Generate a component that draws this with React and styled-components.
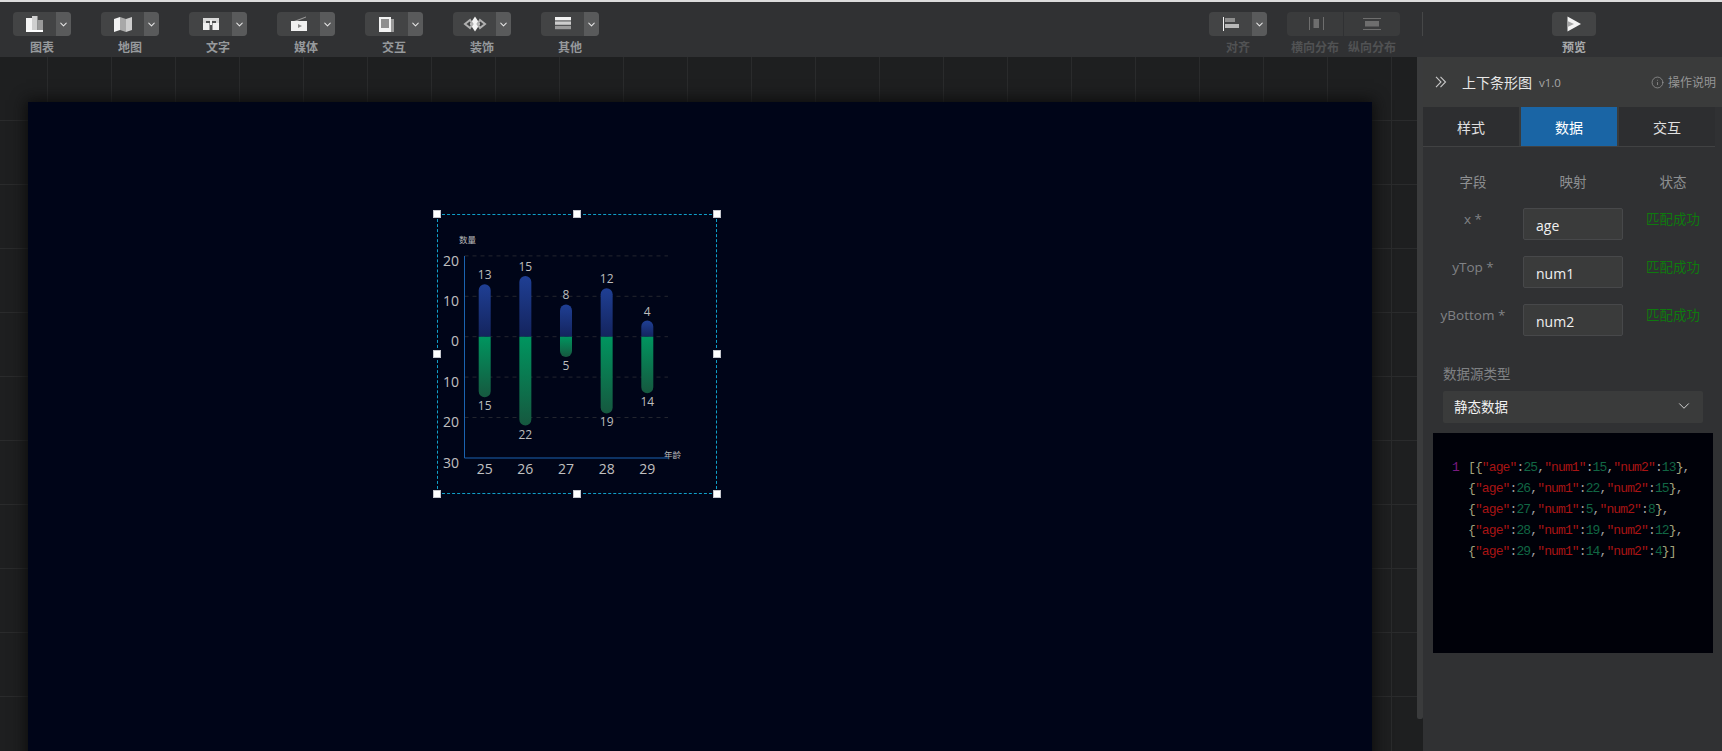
import React from 'react'
import styled, {createGlobalStyle} from 'styled-components'
import {ChevronDown, Info} from 'lucide-react'

const GlobalStyle = createGlobalStyle`
  html, body {
    margin: 0;
    height: 100%;
    background: #1e1f20;
  }
  body {
    font-family: "Open Sans", "Noto Sans CJK SC", sans-serif;
    overflow: hidden;
  }
`

const Page = styled.div`
  display: flex;
  flex-direction: column;
  height: 100vh;
  overflow: hidden;
  border-top: 2px solid #dcdcdc;
  box-sizing: border-box;
`

const Toolbar = styled.header`
  display: flex;
  flex: none;
  height: 55px;
  padding: 10px 126px 0 13px;
  box-sizing: border-box;
  background: #303133;
`

const ToolGroup = styled.div`
  display: flex;
  gap: ${props => props.$gap || 0}px;
`

const RightTools = styled(ToolGroup)`
  margin-left: auto;
`

const Tool = styled.div`
  display: flex;
  flex-direction: column;
  align-items: center;
  width: ${props => props.$width || 58}px;
  margin-right: ${props => props.$after || 0}px;
`

const ToolButton = styled.div`
  display: flex;
  width: 100%;
  height: 24px;
  overflow: hidden;
  background: ${props => (props.$dim ? '#3a3b3c' : '#434445')};
  border-radius: ${props => props.$radius || '4px'};
`

const ToolFace = styled.div`
  flex: 1;
  display: flex;
  align-items: center;
  justify-content: center;
`

const ToolCaret = styled.div`
  flex: none;
  width: 15px;
  display: flex;
  align-items: center;
  justify-content: center;
  background: #595a5b;
  color: #e6e6e6;
`

const ToolLabel = styled.span`
  margin-top: 3px;
  font-size: 12px;
  line-height: 17px;
  font-weight: 700;
  white-space: nowrap;
  color: ${props => (props.$dim ? '#515253' : props.$bright ? '#a8aaac' : '#96999c')};
`

const ToolDivider = styled.div`
  width: 1px;
  height: 24px;
  margin-right: 129px;
  background: #464748;
`

const Main = styled.main`
  flex: 1;
  min-height: 0;
  display: flex;
  background: #1e1f20;
`

const Workspace = styled.section`
  flex: 1;
  min-width: 0;
  overflow: hidden;
  padding: 45px 0 0 28px;
  box-sizing: border-box;
  background-color: #1e1f20;
  background-image:
    linear-gradient(to right, #2a2b2c 1px, transparent 1px),
    linear-gradient(to bottom, #2a2b2c 1px, transparent 1px);
  background-size: 64px 64px;
  background-position: 47px 63px;
`

const Stage = styled.div`
  position: relative;
  width: 1344px;
  height: 900px;
  background: #000518;
  box-shadow: 0 0 14px 2px #0c0c0c;
`

const Widget = styled.div`
  position: absolute;
  left: 409px;
  top: 112px;
  width: 280px;
  height: 280px;
  box-sizing: border-box;
  border: 1px dashed #0f9fc8;
`

const ChartSvg = styled.svg`
  position: absolute;
  left: -1px;
  top: -1px;
  display: block;
`

const HandleLayer = styled.div`
  position: absolute;
  left: -1px;
  top: -1px;
  width: 280px;
  height: 280px;
`

const Handle = styled.span`
  position: absolute;
  left: ${props => props.$x}%;
  top: ${props => props.$y}%;
  width: 8px;
  height: 8px;
  margin: -4px 0 0 -4px;
  box-sizing: border-box;
  background: #fff;
  border: 1px solid #c4c6cc;
`

const ScrollThumb = styled.div`
  flex: none;
  width: 6px;
  height: 662px;
  background: #3a3b3c;
  border-radius: 0 0 2px 2px;
`

const Panel = styled.aside`
  flex: none;
  width: 299px;
  background: #303133;
`

const PanelHead = styled.div`
  display: flex;
  align-items: center;
  height: 50px;
  padding: 0 6px 0 12px;
  box-sizing: border-box;
  background: #3a3b3b;
  color: #c8c8c8;
`

const PanelTitle = styled.span`
  margin-left: 15px;
  font-size: 14px;
  color: #e8e8e8;
`

const PanelVersion = styled.span`
  margin-left: 7px;
  font-size: 11.5px;
  color: #a8a8a8;
`

const HelpLink = styled.span`
  display: flex;
  align-items: center;
  gap: 4px;
  margin-left: auto;
  font-size: 12px;
  color: #969696;
`

const TabRow = styled.nav`
  display: flex;
  gap: 2px;
  width: 292px;
  height: 40px;
  box-sizing: border-box;
  border-bottom: 1px solid #414243;
  background: #3a3b3b;
`

const Tab = styled.div`
  flex: 1;
  display: flex;
  align-items: center;
  justify-content: center;
  font-size: 14px;
  background: ${props => (props.$active ? '#1a65a5' : '#2d2e30')};
  color: ${props => (props.$active ? '#fff' : '#e0e0e0')};
`

const FieldGrid = styled.div`
  display: grid;
  grid-template-columns: repeat(3, 100px);
  grid-template-rows: 24px repeat(3, 32px);
  row-gap: 16px;
  padding-top: 21px;
  align-items: start;
  justify-items: center;
`

const FieldHeading = styled.span`
  font-size: 13.5px;
  line-height: 28px;
  color: #8d8f91;
`

const FieldName = styled.span`
  font-size: 13.5px;
  line-height: 22px;
  color: #808285;
`

const FieldInput = styled.input`
  width: 100%;
  height: 32px;
  padding: 2px 0 0 12px;
  box-sizing: border-box;
  font: 14px "Open Sans", "Noto Sans CJK SC", sans-serif;
  color: #f0f0f0;
  background: #3a3b3b;
  border: 1px solid #47484a;
  border-radius: 2px;
  outline: none;
`

const FieldStatus = styled.span`
  font-size: 13.5px;
  line-height: 22px;
  color: #0e7a0e;
`

const SourceBlock = styled.div`
  padding: 28px 19px 0 20px;
`

const SourceLabel = styled.div`
  font-size: 13.5px;
  line-height: 20px;
  color: #808285;
`

const SourceSelect = styled.div`
  display: flex;
  align-items: center;
  justify-content: space-between;
  height: 32px;
  margin-top: 7px;
  padding: 0 10px 2px 11px;
  box-sizing: border-box;
  font-size: 13.5px;
  color: #f2f2f2;
  background: #3a3b3b;
  border-radius: 2px;
`

const CodeBox = styled.pre`
  display: flex;
  width: 280px;
  height: 220px;
  margin: 10px 0 0 10px;
  padding: 24px 0 0 19px;
  box-sizing: border-box;
  overflow: hidden;
  background: #000109;
  font-family: "Liberation Mono", monospace;
  font-size: 13px;
  letter-spacing: -0.88px;
  line-height: 21px;
  color: #a0a0a0;
`

const LineNumber = styled.span`
  width: 16px;
  flex: none;
  color: #7a1a80;
`

const CodeLines = styled.code`
  font: inherit;
  letter-spacing: inherit;
  white-space: pre;
`

const CodeRow = styled.div`
  height: 21px;
`

const TOKEN_COLORS = {
  bracket: '#a3a37c',
  key: '#a81414',
  number: '#116644',
  punct: '#a0a0a0'
}

const Token = styled.span`
  color: ${props => TOKEN_COLORS[props.$kind]};
`

const TOP_TOOLS = [
  {label: '图表', icon: 'chart'},
  {label: '地图', icon: 'map'},
  {label: '文字', icon: 'text'},
  {label: '媒体', icon: 'media'},
  {label: '交互', icon: 'interact'},
  {label: '装饰', icon: 'decor'},
  {label: '其他', icon: 'other'}
]

const ICONS = {
  chart: (
    <>
      <rect x="0" y="3" width="6" height="12" fill="#f4f4f4" />
      <rect x="6" y="1" width="5.5" height="14" fill="#cfcfcf" />
      <rect x="11.5" y="5" width="5.5" height="10" fill="#9a9a9a" />
      <rect x="0" y="15" width="17" height="2" fill="#fff" />
    </>
  ),
  map: (
    <>
      <path d="M0 4 L6 2 V15 L0 17 Z" fill="#f2f2f2" />
      <path d="M6 2 L12 4 V17 L6 15 Z" fill="#a8a8a8" />
      <path d="M12 4 L18 2 V15 L12 17 Z" fill="#cdcdcd" />
    </>
  ),
  text: (
    <>
      <rect x="1" y="3" width="16" height="12" fill="#f0f0f0" />
      <path d="M1 3 H17 V8 H1 Z" fill="#d8d8d8" />
      <path d="M4 6 H14 V8 H10.5 V15 H7.5 V8 H4 Z" fill="#505152" />
      <rect x="8" y="5" width="2" height="5" fill="#f0f0f0" />
    </>
  ),
  media: (
    <>
      <path d="M4 6 L16 1.5 V2.6 L6 6.5 Z" fill="#9a9a9a" />
      <rect x="1" y="6" width="16" height="10" fill="#f0f0f0" />
      <path d="M8 9 L12 11 L8 13 Z" fill="#8a8a8a" />
    </>
  ),
  interact: (
    <>
      <rect x="11" y="4" width="5" height="13" fill="#999" />
      <rect x="1" y="2" width="12" height="15" fill="#f2f2f2" />
      <rect x="3" y="4" width="8" height="9" fill="#8e8e8e" />
    </>
  ),
  decor: (
    <>
      <path d="M9 1.5 L14 9 L9 16.5 L4 9 Z" fill="#f4f4f4" />
      <path d="M4 5 L-1 9 L4 13 L6.5 9 Z" fill="none" stroke="#b0b0b0" strokeWidth="2" />
      <path d="M14 5 L19 9 L14 13 L11.5 9 Z" fill="none" stroke="#b0b0b0" strokeWidth="2" />
    </>
  ),
  other: (
    <>
      <rect x="1" y="2" width="16" height="3.4" fill="#f2f2f2" />
      <rect x="1" y="6.4" width="16" height="3.4" fill="#cdcdcd" />
      <rect x="1" y="10.8" width="16" height="3.4" fill="#9a9a9a" />
    </>
  ),
  align: (
    <>
      <rect x="1" y="2" width="1" height="14" fill="#f4f4f4" />
      <rect x="3" y="3" width="10" height="4" fill="#8d8d8d" />
      <rect x="3" y="9" width="14" height="4" fill="#b8b8b8" />
    </>
  ),
  spreadX: (
    <>
      <rect x="3" y="2" width="1" height="13" fill="#6e6e6e" />
      <rect x="7.5" y="4" width="5.5" height="9" fill="#6e6e6e" />
      <rect x="17" y="2" width="1" height="13" fill="#6e6e6e" />
    </>
  ),
  spreadY: (
    <>
      <rect x="0" y="3" width="18" height="1" fill="#6e6e6e" />
      <rect x="2" y="6" width="14" height="5.5" fill="#6e6e6e" />
      <rect x="0" y="14" width="18" height="1" fill="#6e6e6e" />
    </>
  ),
  play: (
    <>
      <path d="M2.5 1.5 L16 9 L2.5 16.5 Z" fill="#f4f4f4" />
      <path d="M2.5 6 L9 9 L2.5 12 Z" fill="#a6a6a6" />
    </>
  )
}

function ToolIcon({name}) {
  return (
    <svg width="18" height="18" viewBox="0 0 18 18" style={{overflow: 'visible'}}>
      {ICONS[name]}
    </svg>
  )
}

function DropTool({label, icon, dim, after}) {
  return (
    <Tool $after={after}>
      <ToolButton>
        <ToolFace>
          <ToolIcon name={icon} />
        </ToolFace>
        <ToolCaret>
          <ChevronDown size={11} strokeWidth={2.2} />
        </ToolCaret>
      </ToolButton>
      <ToolLabel $dim={dim}>{label}</ToolLabel>
    </Tool>
  )
}

const ROWS = [
  {age: 25, top: 13, bottom: 15},
  {age: 26, top: 15, bottom: 22},
  {age: 27, top: 8, bottom: 5},
  {age: 28, top: 12, bottom: 19},
  {age: 29, top: 4, bottom: 14}
]

const AXIS_X = 27.5
const AXIS_BOTTOM = 244
const AXIS_RIGHT = 231
const ZERO_Y = 122.7
const UNIT = 4.04
const BAR_WIDTH = 12
const HANDLES = [
  [0, 0], [50, 0], [100, 0],
  [0, 50], [100, 50],
  [0, 100], [50, 100], [100, 100]
]

function barPath(cx, y0, y1) {
  const r = BAR_WIDTH / 2
  const dir = y1 < y0 ? 1 : -1
  const sweep = y1 < y0 ? 1 : 0
  return `M${cx - r} ${y0} V${y1 + dir * r} A${r} ${r} 0 0 ${sweep} ${cx + r} ${y1 + dir * r} V${y0} Z`
}

function UpDownChart() {
  const labelStyle = {fontFamily: '"Open Sans", "Noto Sans CJK SC", sans-serif'}
  return (
    <ChartSvg width="280" height="280" viewBox="0 0 280 280" style={labelStyle}>
      <defs>
        <linearGradient id="barTop" x1="0" y1="0" x2="0" y2="1">
          <stop offset="0" stopColor="#1f3f94" />
          <stop offset="1" stopColor="#14245e" />
        </linearGradient>
        <linearGradient id="barBottom" x1="0" y1="0" x2="0" y2="1">
          <stop offset="0" stopColor="#00955f" />
          <stop offset="1" stopColor="#16583f" />
        </linearGradient>
      </defs>
      {[-20, -10, 0, 10, 20].map(v => (
        <line
          key={v}
          x1={AXIS_X}
          x2={AXIS_RIGHT}
          y1={ZERO_Y + v * UNIT}
          y2={ZERO_Y + v * UNIT}
          stroke="#23262f"
          strokeDasharray="4 4"
        />
      ))}
      <path d={`M${AXIS_X} 42 V${AXIS_BOTTOM} H${AXIS_RIGHT}`} fill="none" stroke="#1b63b0" />
      {[
        ['20', 47],
        ['10', 87],
        ['0', 127],
        ['10', 168],
        ['20', 208],
        ['30', 249]
      ].map(([text, y]) => (
        <text key={y} x="22" y={y + 5} textAnchor="end" fontSize="14" fill="#c0c0c0">
          {text}
        </text>
      ))}
      {ROWS.map((row, i) => {
        const cx = 47.7 + i * 40.65
        const topY = ZERO_Y - row.top * UNIT
        const bottomY = ZERO_Y + row.bottom * UNIT
        return (
          <g key={row.age}>
            <path d={barPath(cx, ZERO_Y, topY)} fill="url(#barTop)" />
            <path d={barPath(cx, ZERO_Y, bottomY)} fill="url(#barBottom)" />
            <text x={cx} y={topY - 5} textAnchor="middle" fontSize="12" fill="#bdbdbd">
              {row.top}
            </text>
            <text x={cx} y={bottomY + 13} textAnchor="middle" fontSize="12" fill="#bdbdbd">
              {row.bottom}
            </text>
            <text x={cx} y={260} textAnchor="middle" fontSize="14" fill="#c0c0c0">
              {row.age}
            </text>
          </g>
        )
      })}
      <text x="22" y="29" fontSize="8.5" fill="#b8b8b8">数量</text>
      <text x="227" y="244" fontSize="8.5" fill="#b8b8b8">年龄</text>
    </ChartSvg>
  )
}

const CODE = [
  '[{"age":25,"num1":15,"num2":13},',
  '{"age":26,"num1":22,"num2":15},',
  '{"age":27,"num1":5,"num2":8},',
  '{"age":28,"num1":19,"num2":12},',
  '{"age":29,"num1":14,"num2":4}]'
]

function tokenKind(text) {
  if (text.startsWith('"')) return 'key'
  if (/^\d/.test(text)) return 'number'
  if (/^[\[\]{}]/.test(text)) return 'bracket'
  return 'punct'
}

function CodeLine({text}) {
  const parts = text.match(/"[^"]*"|\d+|[\[\]{}]|[:,]/g)
  return (
    <CodeRow>
      {parts.map((part, i) => (
        <Token key={i} $kind={tokenKind(part)}>
          {part}
        </Token>
      ))}
    </CodeRow>
  )
}

const FIELDS = [
  {name: 'x *', value: 'age'},
  {name: 'yTop *', value: 'num1'},
  {name: 'yBottom *', value: 'num2'}
]

function CollapseIcon() {
  return (
    <svg width="12" height="12" viewBox="0 0 12 12" fill="none" stroke="currentColor" strokeWidth="1.1">
      <path d="M1 0.8 L6 6 L1 11.2 M5.5 0.8 L10.5 6 L5.5 11.2" />
    </svg>
  )
}

export default function App() {
  return (
    <Page>
      <GlobalStyle />
      <Toolbar>
        <ToolGroup $gap={30}>
          {TOP_TOOLS.map(tool => (
            <DropTool key={tool.label} {...tool} />
          ))}
        </ToolGroup>
        <RightTools>
          <DropTool label="对齐" icon="align" dim after={20} />
          <Tool $width={56} $after={1}>
            <ToolButton $dim $radius="4px 0 0 4px">
              <ToolFace>
                <ToolIcon name="spreadX" />
              </ToolFace>
            </ToolButton>
            <ToolLabel $dim>横向分布</ToolLabel>
          </Tool>
          <Tool $width={56} $after={22}>
            <ToolButton $dim $radius="0 4px 4px 0">
              <ToolFace>
                <ToolIcon name="spreadY" />
              </ToolFace>
            </ToolButton>
            <ToolLabel $dim>纵向分布</ToolLabel>
          </Tool>
          <ToolDivider />
          <Tool $width={44}>
            <ToolButton>
              <ToolFace>
                <ToolIcon name="play" />
              </ToolFace>
            </ToolButton>
            <ToolLabel $bright>预览</ToolLabel>
          </Tool>
        </RightTools>
      </Toolbar>
      <Main>
        <Workspace>
          <Stage>
            <Widget>
              <UpDownChart />
              <HandleLayer>
                {HANDLES.map(([x, y]) => (
                  <Handle key={`${x}-${y}`} $x={x} $y={y} />
                ))}
              </HandleLayer>
            </Widget>
          </Stage>
        </Workspace>
        <ScrollThumb />
        <Panel>
          <PanelHead>
            <CollapseIcon />
            <PanelTitle>上下条形图</PanelTitle>
            <PanelVersion>v1.0</PanelVersion>
            <HelpLink>
              <Info size={13} strokeWidth={1.4} />
              操作说明
            </HelpLink>
          </PanelHead>
          <TabRow>
            <Tab>样式</Tab>
            <Tab $active>数据</Tab>
            <Tab>交互</Tab>
          </TabRow>
          <FieldGrid>
            <FieldHeading>字段</FieldHeading>
            <FieldHeading>映射</FieldHeading>
            <FieldHeading>状态</FieldHeading>
            {FIELDS.map(field => (
              <React.Fragment key={field.name}>
                <FieldName>{field.name}</FieldName>
                <FieldInput readOnly value={field.value} />
                <FieldStatus>匹配成功</FieldStatus>
              </React.Fragment>
            ))}
          </FieldGrid>
          <SourceBlock>
            <SourceLabel>数据源类型</SourceLabel>
            <SourceSelect>
              静态数据
              <ChevronDown size={18} strokeWidth={1.1} />
            </SourceSelect>
          </SourceBlock>
          <CodeBox>
            <LineNumber>1</LineNumber>
            <CodeLines>
              {CODE.map(line => (
                <CodeLine key={line} text={line} />
              ))}
            </CodeLines>
          </CodeBox>
        </Panel>
      </Main>
    </Page>
  )
}
